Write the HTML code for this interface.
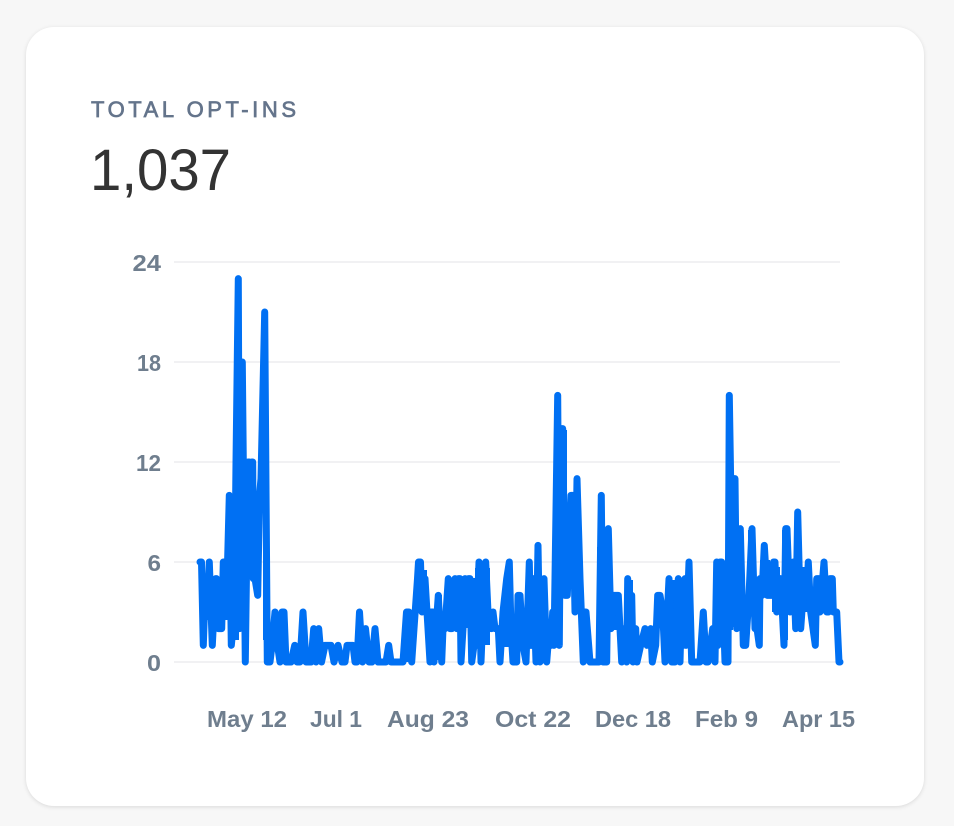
<!DOCTYPE html>
<html>
<head>
<meta charset="utf-8">
<style>
html,body{margin:0;padding:0;width:954px;height:826px;overflow:hidden;background:#f7f7f7}
.card{position:absolute;left:26px;top:27px;width:898px;height:779px;background:#fff;border-radius:28px;box-shadow:0 1px 4px rgba(0,0,0,.12)}
svg{position:absolute;left:0;top:0}
text{font-family:"Liberation Sans",sans-serif}
.a{font-size:23.5px;font-weight:700;fill:#6f7e8e}
</style>
</head>
<body>
<div class="card"></div>
<svg width="954" height="826" viewBox="0 0 954 826">
<text x="91" y="117" font-size="22" fill="#64748b" stroke="#64748b" stroke-width=".7" textLength="205" lengthAdjust="spacing">TOTAL OPT-INS</text>
<text x="90" y="190" font-size="58" fill="#333" textLength="141" lengthAdjust="spacingAndGlyphs">1,037</text>
<g stroke="#f1f1f3" stroke-width="2">
<line x1="174" x2="840" y1="262" y2="262"/>
<line x1="174" x2="840" y1="362" y2="362"/>
<line x1="174" x2="840" y1="462" y2="462"/>
<line x1="174" x2="840" y1="562" y2="562"/>
<line x1="174" x2="840" y1="662" y2="662"/>
</g>
<text class="a" x="132.5" y="271" textLength="28.5" lengthAdjust="spacingAndGlyphs">24</text>
<text class="a" x="137" y="371" textLength="24" lengthAdjust="spacingAndGlyphs">18</text>
<text class="a" x="136" y="471" textLength="25" lengthAdjust="spacingAndGlyphs">12</text>
<text class="a" x="147.5" y="571" textLength="13.5" lengthAdjust="spacingAndGlyphs">6</text>
<text class="a" x="147" y="671" textLength="14" lengthAdjust="spacingAndGlyphs">0</text>
<text class="a" x="207" y="727" textLength="80" lengthAdjust="spacingAndGlyphs">May 12</text>
<text class="a" x="310" y="727" textLength="52" lengthAdjust="spacingAndGlyphs">Jul 1</text>
<text class="a" x="387" y="727" textLength="82" lengthAdjust="spacingAndGlyphs">Aug 23</text>
<text class="a" x="495" y="727" textLength="76" lengthAdjust="spacingAndGlyphs">Oct 22</text>
<text class="a" x="595" y="727" textLength="76" lengthAdjust="spacingAndGlyphs">Dec 18</text>
<text class="a" x="695" y="727" textLength="63" lengthAdjust="spacingAndGlyphs">Feb 9</text>
<text class="a" x="782" y="727" textLength="73" lengthAdjust="spacingAndGlyphs">Apr 15</text>
<path fill="#0070f3" d="M201 585h21v35h-21zM223 570h11v50h-11zM228 500h4v140h-4zM235 370h9v100h-9zM235 470h4v170h-4zM247 465h8v113h-8zM256 530h4v65h-4zM263 480h6v160h-6zM404 612h7v50h-7zM416 570h11v42h-11zM428 612h5v48h-5zM435 595h7v65h-7zM446 578h29v50h-29zM475 568h15v77h-15zM503 580h9v67h-9zM527 580h19v67h-19zM555 400h6v240h-6zM555 430h12v167h-12zM569 500h12v78h-12zM573 578h7v34h-7zM597 547h8v100h-8zM605 530h6v100h-6zM611 597h9v33h-9zM625 580h8v67h-8zM655 597h8v15h-8zM670 580h19v67h-19zM715 565h8v82h-8zM727 420h6v210h-6zM726 480h12v67h-12zM733 530h10v97h-10zM748 530h7v82h-7zM760 560h10v37h-10zM772 567h8v45h-8zM782 530h6v110h-6zM790 563h8v49h-8zM795 515h5v112h-5zM802 567h8v45h-8zM817 580h16v32h-16z"/>
<g transform="translate(0,662) scale(1,-16.667)">
<polyline fill="none" stroke="#0070f3" stroke-width="7" stroke-linejoin="round" stroke-linecap="round" vector-effect="non-scaling-stroke" points="
200,6 201.5,6 203.3,1 205,4 207,3 209.3,6 212.3,1 215.7,5 216.5,5 218.3,2 221.7,2 223.3,6 225,6 226.7,4 229.3,10 231.3,1 233,2 234.3,2 236,12 238.3,23 239.6,2 241.3,18 242.3,18 245.3,0 248,12 249.3,12 250.6,6 251.7,12 252.7,12 253.3,5 255,5 257.7,4 259.5,10 261,11 264.7,21 267.3,0 270,0 272,1 275,3 277.5,1 280,0 282,3 284,3 286,0 288.3,0 291,0 294.7,1 297,0 300,0 303,3 306,0 311,0 313.7,2 316,0 318.7,2 321.5,0 325,1 328.7,1 331,1 334,0 338,1 342,0 345,0 347,1 350,1 353,1 355,0 357,0 359.5,3 362.5,0 365.5,2 369,0 372,0 375,2 378,0 386,0 388.7,1 391,0 403,0 
406.5,3 409,3 411.7,0 414,2 417.5,5 418.5,6 420.5,6 422,3 425,5 427,3 430,0 431,3 433,3 434,0 436,2 438.3,4 441.7,0 443,2 445,2 448.3,5 450,2 452,2 454,3 455,5 457,2 458.5,5 460,5 461,0 463,2 465,5 467,3 468.5,5 470,5 471.7,0 474,1 476,1 479,6 481,0 483,3 485.7,6 488,3 490,3 491,2 493,3 495,2 498.3,2 500,0 503,3 506.7,5 509.3,6 
511,2 513,0 516.7,0 518,4 520,4 523,1 526,0 529.3,6 531,1 533.3,5 536,0 538,7 540,0 544,5 546.7,0 549.3,2 551,1 552.7,3 554,1 557.7,16 559.3,1 561,14 562.7,14 565,4 567.3,4 571,10 572.7,10 575,3 577,11 580,5 583.3,0 583.5,3 586,3 590,0 596.7,0 599,0 601.3,10 603,0 606.7,0 608.3,8 611,2 613,4 615,4 618.3,4 621.7,0 623,2 626.7,0 627.7,5 629,2 631.7,4 633,0 635.7,2 637,0 640.7,1 645,2 647,1 650.7,2 652.3,0 655.7,1 657.7,4 660,4 662.7,3 665,0 669,5 671.7,0 675,0 678.3,5 680,0 681.7,4 683.5,1 685,5 686,1 689,6 691.7,0 698,0 700,0 703.3,3 706,0 708,0 712.7,2 715,0 716.7,6 718,1 720,6 721.7,6 725,0 728,0 729.3,16 731.7,7 733.5,11 735,11 736.7,2 740.3,8 743.3,1 745.7,1 749,4 752,8 755,2 757,2 759.3,1 760,5 762,4 764.3,7 767.3,4 771.7,4 773.5,6 775,6 776.7,3 779,5 780.7,5 784,1 785.7,8 787,8 790,3 793.3,6 795.7,2 797.7,9 800.7,2 804.3,5 806.5,4 808.3,6 810.7,3 815.3,1 816.7,5 819,5 820,3 824,6 826.7,3 828.5,3 830,5 832.3,5 833.3,3 836.7,3 839,0 840,0"/>
</g>
</svg>
</body>
</html>
